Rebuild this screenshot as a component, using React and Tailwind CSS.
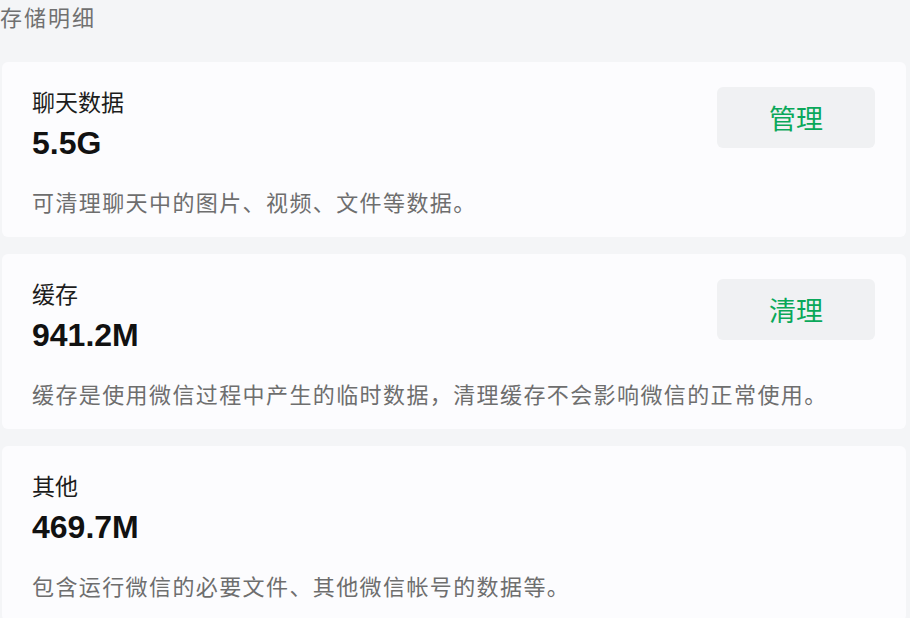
import React from 'react';

const items = [
  { title: '聊天数据', size: '5.5G', desc: '可清理聊天中的图片、视频、文件等数据。', action: '管理' },
  { title: '缓存', size: '941.2M', desc: '缓存是使用微信过程中产生的临时数据，清理缓存不会影响微信的正常使用。', action: '清理' },
  { title: '其他', size: '469.7M', desc: '包含运行微信的必要文件、其他微信帐号的数据等。' },
];

const StorageCard = ({ title, size, desc, action }) => (
  <div className="ml-[2px] mr-[4px] h-[175px] rounded-md bg-[#fcfcfe] pl-[30px] pr-[31px] pt-[25px] flex flex-col">
    <div className="flex items-start justify-between">
      <div>
        <div className="mt-[1px] text-[23px] leading-[30px] text-[#1c1c1c]">{title}</div>
        <div className="mt-[6px] text-[32px] leading-[38px] font-bold text-[#111]">{size}</div>
      </div>
      {action && (
        <button className="w-[158px] h-[61px] pt-[5px] rounded-md bg-[#f0f1f3] text-[27px] text-[#0aa85a] flex items-center justify-center">
          {action}
        </button>
      )}
    </div>
    <div className="mt-[27px] whitespace-nowrap text-[22px] leading-[30px] tracking-[1.4px] text-[#6e6e6e]">{desc}</div>
  </div>
);

export default function App() {
  return (
    <div
      className="w-[910px] h-[618px] overflow-hidden bg-[#f4f5f7]"
      style={{ fontFamily: '"Liberation Sans", "Noto Sans CJK SC", sans-serif' }}
    >
      <div className="pt-[4px] text-[22px] leading-[30px] tracking-[2px] text-[#707070]">存储明细</div>
      <div className="mt-[28px] flex flex-col gap-[17px]">
        {items.map((item) => (
          <StorageCard key={item.title} {...item} />
        ))}
      </div>
    </div>
  );
}
